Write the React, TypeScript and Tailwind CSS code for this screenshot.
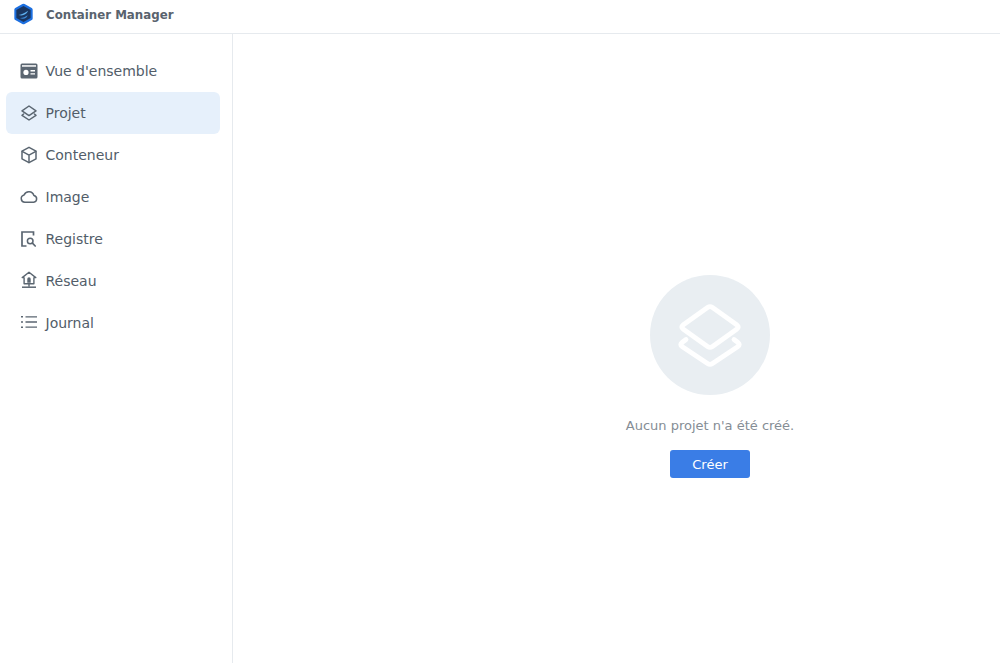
import type { ReactNode } from 'react';

const strokeProps = {
  fill: 'none',
  stroke: 'currentColor',
  strokeWidth: 1.5,
  strokeLinecap: 'round' as const,
  strokeLinejoin: 'round' as const,
};

function Icon({ children }: { children: ReactNode }) {
  return (
    <svg width="18" height="18" viewBox="0 0 18 18" className="shrink-0 text-[#5b6671]" {...strokeProps}>
      {children}
    </svg>
  );
}

const navItems: { label: string; active?: boolean; icon: ReactNode }[] = [
  {
    label: "Vue d'ensemble",
    icon: (
      <>
        <rect x="0.5" y="1.5" width="17" height="15" rx="1.5" fill="currentColor" stroke="none" />
        <rect x="2" y="3.2" width="14" height="1.5" fill="#fff" stroke="none" />
        <circle cx="6" cy="10.4" r="2.6" fill="#fff" stroke="none" />
        <path d="M10.500 8.800h4.500M10.500 11.900h4.500" stroke="#fff" strokeWidth="1.400" strokeLinecap="butt" />
      </>
    ),
  },
  {
    label: 'Projet',
    active: true,
    icon: (
      <>
        <path d="M9 2 16 6.800 9 11.600 2 6.800Z" />
        <path d="M3.600 10 2 11.300 9 16l7-4.700-1.600-1.300" />
      </>
    ),
  },
  {
    label: 'Conteneur',
    icon: (
      <>
        <path d="M9 1.300 16 5.200v7.600l-7 3.900-7-3.900V5.200Z" />
        <path d="M2.200 5.400 9 9.200l6.800-3.800M9 9.200v7.300" />
      </>
    ),
  },
  {
    label: 'Image',
    icon: <path d="M4.800 14.200a3.700 3.700 0 0 1-.7-7.300 5.200 5.200 0 0 1 9.800.6 3.400 3.400 0 0 1-.2 6.700Z" />,
  },
  {
    label: 'Registre',
    icon: (
      <>
        <path d="M6.500 16H2V2h11.500v3.500" strokeLinecap="butt" strokeLinejoin="miter" strokeWidth="1.700" />
        <circle cx="10.200" cy="11" r="2.800" />
        <path d="m12.400 13.200 2.800 2.800" strokeWidth="1.700" />
      </>
    ),
  },
  {
    label: 'Réseau',
    icon: (
      <>
        <path d="M9 1.200 15.800 6.600h-1.900V12.800H4.100V6.600H2.200Z" strokeWidth="1.400" />
        <path d="M7.300 11.800V8a1.700 1.700 0 0 1 3.400 0v3.800Z" fill="currentColor" stroke="none" />
        <path d="M9 12.800v3" strokeWidth="1.400" strokeLinecap="butt" />
        <path d="M2 16.200h14" strokeWidth="1.500" strokeLinecap="butt" />
      </>
    ),
  },
  {
    label: 'Journal',
    icon: (
      <>
        <path d="M5.500 3.800H17M5.500 9H17M5.500 14.200H17" strokeLinecap="butt" strokeWidth="1.300" />
        <path d="M1 3.800h2M1 9h2M1 14.200h2" strokeLinecap="butt" strokeWidth="1.500" />
      </>
    ),
  },
];

function Logo() {
  return (
    <svg width="21" height="22" viewBox="0 0 22 24" className="mb-[3px] shrink-0">
      <path d="M9.800 1 2 5.400Q1 6 1 7.200v9.600q0 1.200 1 1.800L9.800 23q1.200.6 2.400 0l7.800-4.400q1-.6 1-1.800V7.200q0-1.200-1-1.800L12.200 1q-1.200-.6-2.400 0Z" fill="#1c6fe0" />
      <path d="M11 3.200 18.800 7.600v8.800L11 20.800 3.200 16.400V7.600Z" fill="#1a3660" />
      <path d="M5.500 13c3.500-.3 7-2.300 10.500-4.500-1 3.200-5.500 6.300-10.500 4.500Z" fill="#5fb0ee" />
      <path d="M7 16.300c3 .2 6-1.200 8.500-3-.5 2.500-4 5.300-8.500 3Z" fill="#3e88d4" />
    </svg>
  );
}

export default function App() {
  return (
    <div className="flex h-[663px] w-[1000px] flex-col overflow-hidden bg-white font-['DejaVu_Sans',sans-serif] text-[#525d69]">
      <header className="flex h-[34px] shrink-0 items-center gap-[12px] border-b border-[#e6eaee] pb-[2px] pl-[13px]">
        <Logo />
        <span className="text-[11.8px] font-bold leading-none text-[#59636e]">Container Manager</span>
      </header>
      <div className="flex min-h-0 flex-1">
        <aside className="flex w-[233px] shrink-0 flex-col border-r border-[#e6eaee] pt-[16px]">
          {navItems.map((item) => (
            <div
              key={item.label}
              className={`ml-[6px] flex h-[41.9px] w-[214px] items-center gap-[7.5px] rounded-[6px] pl-[14px] text-[14px] ${
                item.active ? 'bg-[#e6f0fb]' : ''
              }`}
            >
              <Icon>{item.icon}</Icon>
              <span className="translate-y-[0.5px]">{item.label}</span>
            </div>
          ))}
        </aside>
        {/* the empty state sits off-centre: its panel runs past the window's right edge */}
        <main className="flex w-[954px] shrink-0 flex-col items-center pt-[241px]">
          <div className="flex h-[120px] w-[120px] items-center justify-center rounded-full bg-[#e9eef2]">
            <svg width="70" height="70" viewBox="0 0 70 70" fill="none" stroke="#fff" strokeWidth="4.800" strokeLinecap="round" strokeLinejoin="round">
              <path d="M32.500 7.500Q35 5.800 37.500 7.500L62 25Q64.500 27 62 29L37.500 46.500Q35 48.200 32.500 46.500L8 29Q5.500 27 8 25Z" />
              <path d="M11 39.500 7 42.500Q4.500 44.500 7 46.500L32.500 63.500Q35 65.200 37.500 63.500L63 46.500Q65.500 44.500 63 42.500L59 39.500" />
            </svg>
          </div>
          <p className="mt-[21px] text-[13px] leading-[20px] text-[#858d95]">Aucun projet n'a été créé.</p>
          <button className="mt-[14px] h-[28px] w-[80px] rounded-[3px] bg-[#3a7de6] pt-[2px] text-[13px] text-white">Créer</button>
        </main>
      </div>
    </div>
  );
}
